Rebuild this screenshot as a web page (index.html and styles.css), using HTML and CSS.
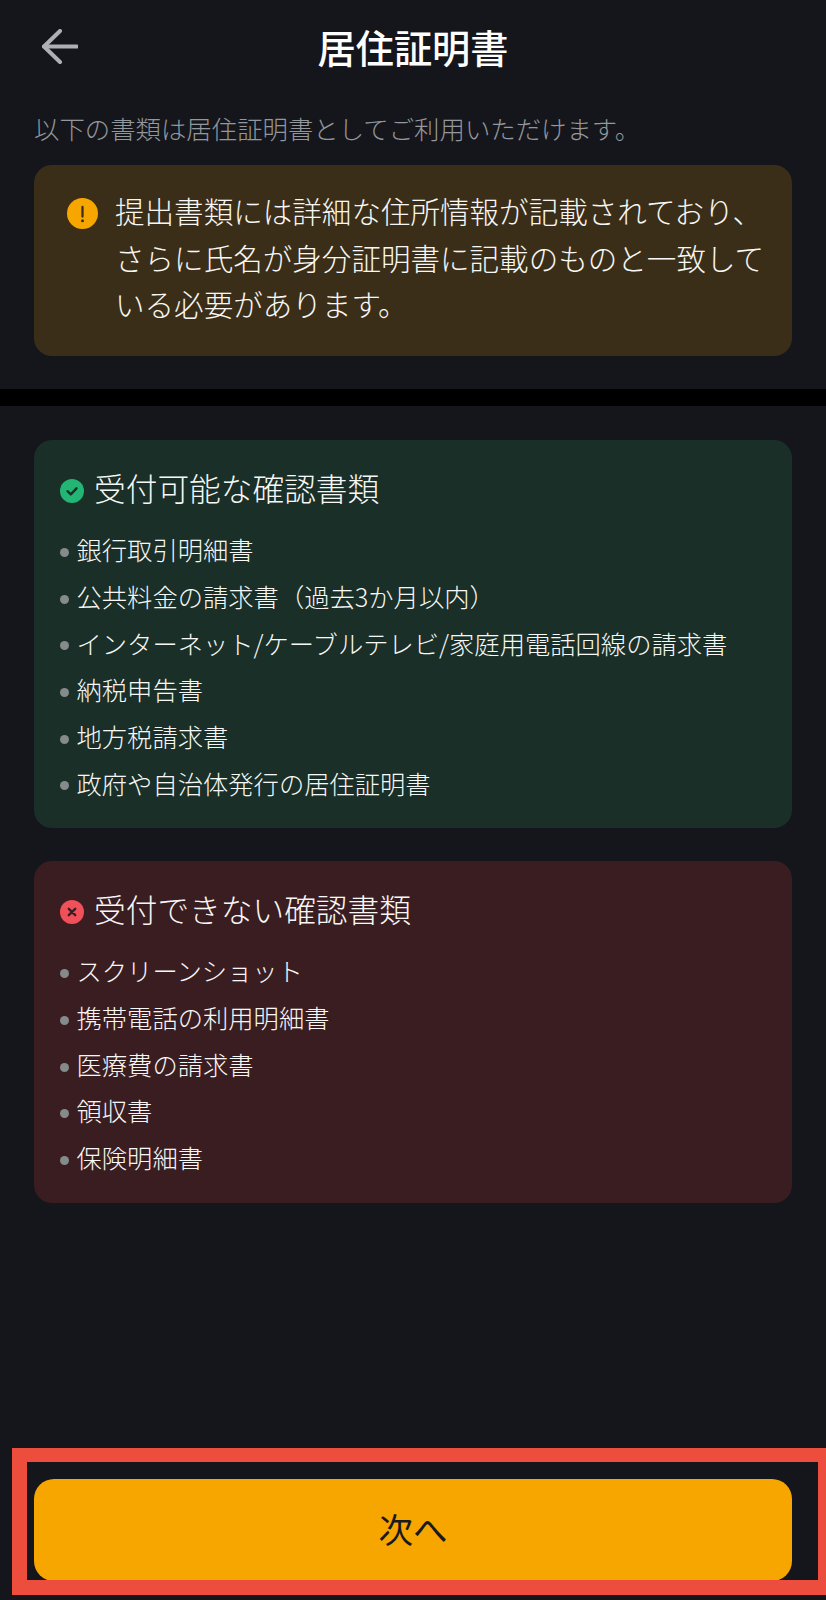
FILE: index.html
```html
<!DOCTYPE html>
<html lang="ja">
<head>
    <meta charset="UTF-8">
    <title>居住証明書</title>
    <link rel="stylesheet" href="styles.css">
</head>
<body>

<div class="page">
    <header class="top-bar">
        <svg class="back-icon" viewBox="0 0 36 36" width="36" height="36" fill="none" stroke="#aeb0b4" stroke-width="4" stroke-linecap="round" stroke-linejoin="round">
            <path d="M35 17.500H2"/>
            <path d="M18 2L2 17.500L18 33"/>
        </svg>
        <h1 class="title">居住証明書</h1>
    </header>

    <section class="intro">
        <p class="lead">以下の書類は居住証明書としてご利用いただけます。</p>
        <div class="notice">
            <svg class="notice-icon" viewBox="0 0 31 31" width="31" height="31">
                <circle cx="15.500" cy="15.500" r="15.500" fill="#f7a600"/>
                <path d="M15.500 9V18.500" stroke="#3b2e18" stroke-width="2.300" stroke-linecap="round"/>
                <circle cx="15.500" cy="22.800" r="1.500" fill="#3b2e18"/>
            </svg>
            <p class="notice-text">提出書類には詳細な住所情報が記載されており、さらに氏名が身分証明書に記載のものと一致している必要があります。</p>
        </div>
    </section>

    <div class="divider"></div>

    <section class="documents">
        <div class="doc-card accepted">
            <h2 class="doc-title">
                <svg class="doc-icon" viewBox="0 0 24 24" width="24" height="24">
                    <circle cx="12" cy="12" r="12" fill="#22b573"/>
                    <path d="M7.500 12.200L10.800 15.300L16.500 9.300" fill="none" stroke="#1a2f28" stroke-width="2.400" stroke-linecap="round" stroke-linejoin="round"/>
                </svg>
                受付可能な確認書類
            </h2>
            <ul class="doc-list">
                <li>銀行取引明細書</li>
                <li>公共料金の請求書（過去3か月以内）</li>
                <li>インターネット/ケーブルテレビ/家庭用電話回線の請求書</li>
                <li>納税申告書</li>
                <li>地方税請求書</li>
                <li>政府や自治体発行の居住証明書</li>
            </ul>
        </div>

        <div class="doc-card rejected">
            <h2 class="doc-title">
                <svg class="doc-icon" viewBox="0 0 24 24" width="24" height="24">
                    <circle cx="12" cy="12" r="12" fill="#f0505a"/>
                    <path d="M8.800 8.800L15.200 15.200M15.200 8.800L8.800 15.200" fill="none" stroke="#3a1e22" stroke-width="2.400" stroke-linecap="round"/>
                </svg>
                受付できない確認書類
            </h2>
            <ul class="doc-list">
                <li>スクリーンショット</li>
                <li>携帯電話の利用明細書</li>
                <li>医療費の請求書</li>
                <li>領収書</li>
                <li>保険明細書</li>
            </ul>
        </div>
    </section>

    <footer class="bottom-bar">
        <button class="next-button">次へ</button>
        <div class="highlight-frame"></div>
    </footer>
</div>

</body>
</html>
```

FILE: styles.css
```css
* {
    box-sizing: border-box;
}
body {
    margin: 0;
    background-color: #14161b;
    font-family: "Noto Sans CJK JP", "Noto Sans", sans-serif;
    font-weight: 300;
    color: #f7f7f5;
}
p, h1, h2, ul {
    margin: 0;
    padding: 0;
}
.page {
    display: flex;
    flex-direction: column;
    min-height: 1600px;
    overflow: hidden;
}
.top-bar {
    display: grid;
    grid-template-columns: 1fr auto 1fr;
    align-items: center;
    height: 94px;
    padding: 0 42px;
}
.title {
    font-size: 38.200px;
    font-weight: 500;
    line-height: 90px;
    color: #fff;
    grid-column: 2;
    grid-row: 1;
}
.back-icon {
    grid-column: 1;
    grid-row: 1;
}
.intro {
    padding: 16px 34px 33px;
}
.lead {
    font-size: 25.400px;
    line-height: 36px;
    color: #94979c;
    margin-bottom: 19px;
}
.notice {
    display: flex;
    align-items: flex-start;
    gap: 17px;
    padding: 23px 26px 28px 33px;
    border-radius: 18px;
    background-color: #3b2e18;
}
.notice-icon {
    flex: none;
    margin-top: 10px;
}
.notice-text {
    font-size: 29.550px;
    line-height: 46.700px;
}
.divider {
    height: 17px;
    background-color: #000;
}
.documents {
    display: flex;
    flex-direction: column;
    gap: 33px;
    padding: 34px 34px 0;
}
.doc-card {
    padding: 25px 26px 22px;
    border-radius: 18px;
}
.accepted {
    background-color: #192f28;
}
.rejected {
    background-color: #3a1d21;
}
.doc-title {
    display: flex;
    align-items: center;
    gap: 10px;
    font-size: 31.700px;
    font-weight: 300;
    line-height: 44px;
}
.doc-icon {
    flex: none;
    margin-top: 7px;
}
.doc-list {
    list-style: none;
    margin-top: 17px;
}
.doc-list li {
    display: flex;
    align-items: center;
    gap: 7.500px;
    font-size: 25.300px;
    line-height: 46.700px;
}
.doc-list li::before {
    content: "";
    flex: none;
    width: 9px;
    height: 9px;
    margin-top: 6px;
    border-radius: 50%;
    background-color: #858a8a;
}
.bottom-bar {
    position: relative;
    margin-top: auto;
    padding: 0 34px 19px;
}
.next-button {
    display: block;
    width: 100%;
    height: 102px;
    padding: 0 0 4px;
    border: 0;
    border-radius: 20px;
    background-color: #f7a600;
    font-family: inherit;
    font-size: 34.500px;
    font-weight: 400;
    color: #181a20;
}
.highlight-frame {
    position: absolute;
    top: -31px;
    left: 12px;
    right: 0;
    bottom: 5px;
    border: solid #ec4d3d;
    border-width: 14px 8px 15px 15px;
}
```
